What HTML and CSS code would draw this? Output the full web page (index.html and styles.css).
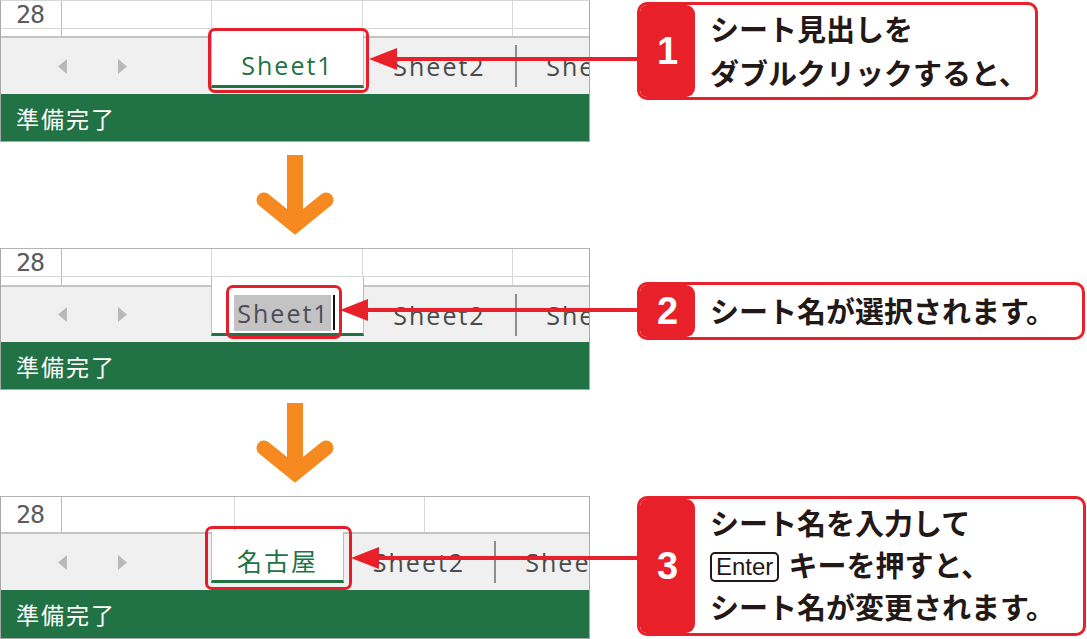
FILE: index.html
```html
<!DOCTYPE html>
<html lang="ja">
<head>
<meta charset="utf-8">
<title>シート名の変更</title>
<link rel="stylesheet" href="styles.css">
</head>
<body>
<main class="page">

  <section class="step step-1">
    <div class="panel panel-a">
      <div class="row row-full">
        <div class="cell head">28</div>
        <div class="cell w150"></div>
        <div class="cell w151"></div>
        <div class="cell w150"></div>
        <div class="cell grow"></div>
      </div>
      <div class="row row-part part-7">
        <div class="cell head"></div>
        <div class="cell w150"></div>
        <div class="cell w151"></div>
        <div class="cell w150"></div>
        <div class="cell grow"></div>
      </div>
      <div class="tabbar">
        <div class="nav">
          <svg class="tri" viewBox="0 0 9 15"><polygon points="9,0 0,7.5 9,15"/></svg>
          <svg class="tri" viewBox="0 0 9 15"><polygon points="0,0 9,7.5 0,15"/></svg>
        </div>
        <div class="tab active active-a w153"><span class="label green">Sheet1</span></div>
        <div class="tab idle w153"><span class="label">Sheet2</span></div>
        <div class="tab idle w153"><span class="label">Sheet3</span></div>
      </div>
      <div class="status">準備完了</div>
      <div class="mark mark-1"></div>
    </div>
    <div class="callout callout-1">
      <div class="num">1</div>
      <div class="text">シート見出しを<br>ダブルクリックすると、</div>
    </div>
    <svg class="pointer pointer-1" viewBox="0 0 269 24"><line x1="24" y1="12" x2="269" y2="12"/><polygon points="0,12 28,1 28,23"/></svg>
  </section>

  <div class="down">
    <svg viewBox="0 0 90 82"><rect x="37" y="0" width="16" height="62"/><path d="M14 45 L45 70 L76 45"/></svg>
  </div>

  <section class="step step-2">
    <div class="panel panel-b">
      <div class="row row-full">
        <div class="cell head">28</div>
        <div class="cell w150"></div>
        <div class="cell w151"></div>
        <div class="cell w150"></div>
        <div class="cell grow"></div>
      </div>
      <div class="row row-part part-8">
        <div class="cell head"></div>
        <div class="cell w150"></div>
        <div class="cell w151"></div>
        <div class="cell w150"></div>
        <div class="cell grow"></div>
      </div>
      <div class="tabbar">
        <div class="nav">
          <svg class="tri" viewBox="0 0 9 15"><polygon points="9,0 0,7.5 9,15"/></svg>
          <svg class="tri" viewBox="0 0 9 15"><polygon points="0,0 9,7.5 0,15"/></svg>
        </div>
        <div class="tab active active-b w153"><span class="label selected">Sheet1</span><span class="caret"></span></div>
        <div class="tab idle w153"><span class="label">Sheet2</span></div>
        <div class="tab idle w153"><span class="label">Sheet3</span></div>
      </div>
      <div class="status">準備完了</div>
      <div class="mark mark-2"></div>
    </div>
    <div class="callout callout-2">
      <div class="num">2</div>
      <div class="text">シート名が選択されます。</div>
    </div>
    <svg class="pointer pointer-2" viewBox="0 0 298 24"><line x1="24" y1="12" x2="298" y2="12"/><polygon points="0,12 28,1 28,23"/></svg>
  </section>

  <div class="down">
    <svg viewBox="0 0 90 82"><rect x="37" y="0" width="16" height="62"/><path d="M14 45 L45 70 L76 45"/></svg>
  </div>

  <section class="step step-3">
    <div class="panel panel-c">
      <div class="row row-full row-tall">
        <div class="cell head">28</div>
        <div class="cell w173"></div>
        <div class="cell w190"></div>
        <div class="cell grow"></div>
      </div>
      <div class="tabbar">
        <div class="nav">
          <svg class="tri" viewBox="0 0 9 15"><polygon points="9,0 0,7.5 9,15"/></svg>
          <svg class="tri" viewBox="0 0 9 15"><polygon points="0,0 9,7.5 0,15"/></svg>
        </div>
        <div class="tab active active-c w133"><span class="label green jp">名古屋</span></div>
        <div class="tab idle w152"><span class="label">Sheet2</span></div>
        <div class="tab idle w153"><span class="label">Sheet3</span></div>
      </div>
      <div class="status">準備完了</div>
      <div class="mark mark-3"></div>
    </div>
    <div class="callout callout-3">
      <div class="num">3</div>
      <div class="text">シート名を入力して<br><span class="key">Enter</span>キーを押すと、<br>シート名が変更されます。</div>
    </div>
    <svg class="pointer pointer-3" viewBox="0 0 287 24"><line x1="24" y1="12" x2="287" y2="12"/><polygon points="0,12 28,1 28,23"/></svg>
  </section>

</main>
</body>
</html>
```

FILE: styles.css
```css
* { box-sizing: border-box; }

html, body {
  margin: 0;
  padding: 0;
  background: #ffffff;
}

.page {
  width: 1087px;
  height: 639px;
  overflow: hidden;
  display: flex;
  flex-direction: column;
  font-family: "Noto Sans CJK JP", "Noto Sans", sans-serif;
}

/* ---------- step rows ---------- */
.step {
  position: relative;
  display: flex;
  align-items: flex-start;
  flex: none;
}
.step-1 { height: 142px; }
.step-2 { height: 142px; }
.step-3 { height: 143px; }

.down {
  flex: none;
  height: 106px;
  padding-top: 13px;
  padding-left: 250px;
}
.down svg {
  display: block;
  width: 90px;
  height: 82px;
}
.down rect { fill: #f6891f; }
.down path {
  fill: none;
  stroke: #f6891f;
  stroke-width: 15;
  stroke-linecap: round;
  stroke-linejoin: miter;
}

/* ---------- excel panel ---------- */
.panel {
  position: relative;
  width: 590px;
  flex: none;
  display: flex;
  flex-direction: column;
  overflow: hidden;
  border-left: 1px solid #a9a9a9;
  border-right: 1px solid #a9a9a9;
  border-bottom: 1px solid #a9a9a9;
  background: #ffffff;
}
.panel-a { height: 142px; border-top: 1px solid #d6d6d6; }
.panel-b { height: 142px; border-top: 1px solid #b3b3b3; }
.panel-c { height: 143px; border-top: 1px solid #b3b3b3; }

.row {
  display: flex;
  flex: none;
  background: #ffffff;
}
.row-full { height: 28px; border-bottom: 1px solid #d8d8d8; }
.row-tall { height: 35px; border-bottom: none; }
.part-7 { height: 7px; }
.part-8 { height: 8px; }

.cell {
  height: 100%;
  border-right: 1px solid #d8d8d8;
  flex: none;
}
.cell.head {
  width: 61px;
  border-right-color: #bdbdbd;
  display: flex;
  align-items: center;
  padding-left: 15px;
  font-family: "DejaVu Sans Mono", monospace;
  font-size: 25px;
  color: #5c5c5c;
  letter-spacing: -1px;
}
.w150 { width: 150px; }
.w151 { width: 151px; }
.w173 { width: 173px; }
.w190 { width: 190px; }
.cell.grow { flex: 1; border-right: none; }

.tabbar {
  display: flex;
  height: 58px;
  flex: none;
  background: #f0f0f0;
  border-top: 2px solid #c4c4c4;
}
.panel-b .tabbar { height: 57px; }

.nav {
  width: 210px;
  flex: none;
  display: flex;
  align-items: center;
  padding-left: 57px;
  gap: 51px;
}
.tri {
  width: 9px;
  height: 15px;
  display: block;
}
.tri polygon { fill: #b9b9b9; }

.tab {
  flex: none;
  display: flex;
  align-items: center;
  justify-content: center;
}
.w133 { width: 133px; }
.w152 { width: 152px; }
.w153 { width: 153px; }

.tab.active {
  position: relative;
  z-index: 1;
  background: #ffffff;
  border-left: 1px solid #bdbdbd;
  border-right: 1px solid #bdbdbd;
  border-bottom: 3px solid #217346;
}
.active-a { margin-top: -9px; margin-bottom: 6px; padding-top: 15px; }
.active-b { margin-top: -10px; margin-bottom: 6px; padding-top: 15px; padding-right: 6px; }
.active-c { margin-top: -2px; margin-bottom: 7px; padding-top: 8px; }

.tab.idle {
  align-self: center;
  height: 42px;
  border-right: 2px solid #8f8f8f;
}

.label {
  font-family: "Open Sans", "Liberation Sans", sans-serif;
  font-size: 25px;
  letter-spacing: 2px;
  color: #4a4a4a;
  white-space: nowrap;
}
.label.green { color: #217346; }
.label.jp {
  font-family: "Noto Sans CJK JP", sans-serif;
  font-size: 25px;
  letter-spacing: 2px;
}
.label.selected {
  background: #c3c3c3;
  color: #4d4d5a;
  padding: 0 1px 0 3px;
  line-height: 36px;
}
.caret {
  display: block;
  width: 2px;
  height: 35px;
  background: #111111;
  margin-left: 2px;
}

.status {
  flex: 1;
  background: #217346;
  color: #ffffff;
  display: flex;
  align-items: center;
  padding-left: 15px;
  font-family: "Noto Sans CJK JP", sans-serif;
  font-size: 23px;
  letter-spacing: 2px;
}

/* red highlight boxes (overlays) */
.mark {
  position: absolute;
  border: 3px solid #e41e2b;
  border-radius: 7px;
  z-index: 2;
}
.mark-1 { left: 207px; top: 27px; width: 161px; height: 65px; }
.mark-2 { left: 225px; top: 36px; width: 116px; height: 54px; }
.mark-3 { left: 204px; top: 29px; width: 147px; height: 64px; }

/* ---------- callouts ---------- */
.callout {
  flex: none;
  display: flex;
  margin-left: 47px;
  background: #ffffff;
  border: 3px solid #e8202a;
  border-radius: 10px;
  overflow: hidden;
}
.callout-1 { width: 401px; height: 98px; margin-top: 2px; }
.callout-2 { width: 448px; height: 58px; margin-top: 34px; }
.callout-3 { width: 449px; height: 140px; margin-top: 0; }

.num {
  width: 55px;
  flex: none;
  background: #e8202a;
  border-radius: 0 9px 9px 0;
  color: #ffffff;
  display: flex;
  align-items: center;
  justify-content: center;
  font-family: "Liberation Sans", Arial, sans-serif;
  font-weight: 700;
  font-size: 38px;
}

.text {
  flex: 1;
  display: block;
  padding-left: 15px;
  font-family: "Noto Sans CJK JP", sans-serif;
  font-weight: 700;
  font-size: 29px;
  line-height: 44px;
  color: #231815;
  white-space: nowrap;
}
.callout-1 .text { padding-top: 1px; }
.callout-2 .text { padding-top: 3px; }
.callout-3 .text { line-height: 42px; padding-top: 2px; }

.key {
  display: inline-block;
  vertical-align: 2px;
  height: 30px;
  line-height: 26px;
  padding: 0 4px;
  margin-right: 9px;
  border: 2px solid #231815;
  border-radius: 5px;
  font-family: "Liberation Sans", Arial, sans-serif;
  font-weight: 400;
  font-size: 24px;
}

/* ---------- pointer arrows (overlays) ---------- */
.pointer {
  position: absolute;
  height: 24px;
  z-index: 3;
}
.pointer line { stroke: #e8202a; stroke-width: 4; }
.pointer polygon { fill: #e8202a; }
.pointer-1 { left: 369px; top: 47px; width: 269px; }
.pointer-2 { left: 340px; top: 50px; width: 298px; }
.pointer-3 { left: 351px; top: 50px; width: 287px; }
```
